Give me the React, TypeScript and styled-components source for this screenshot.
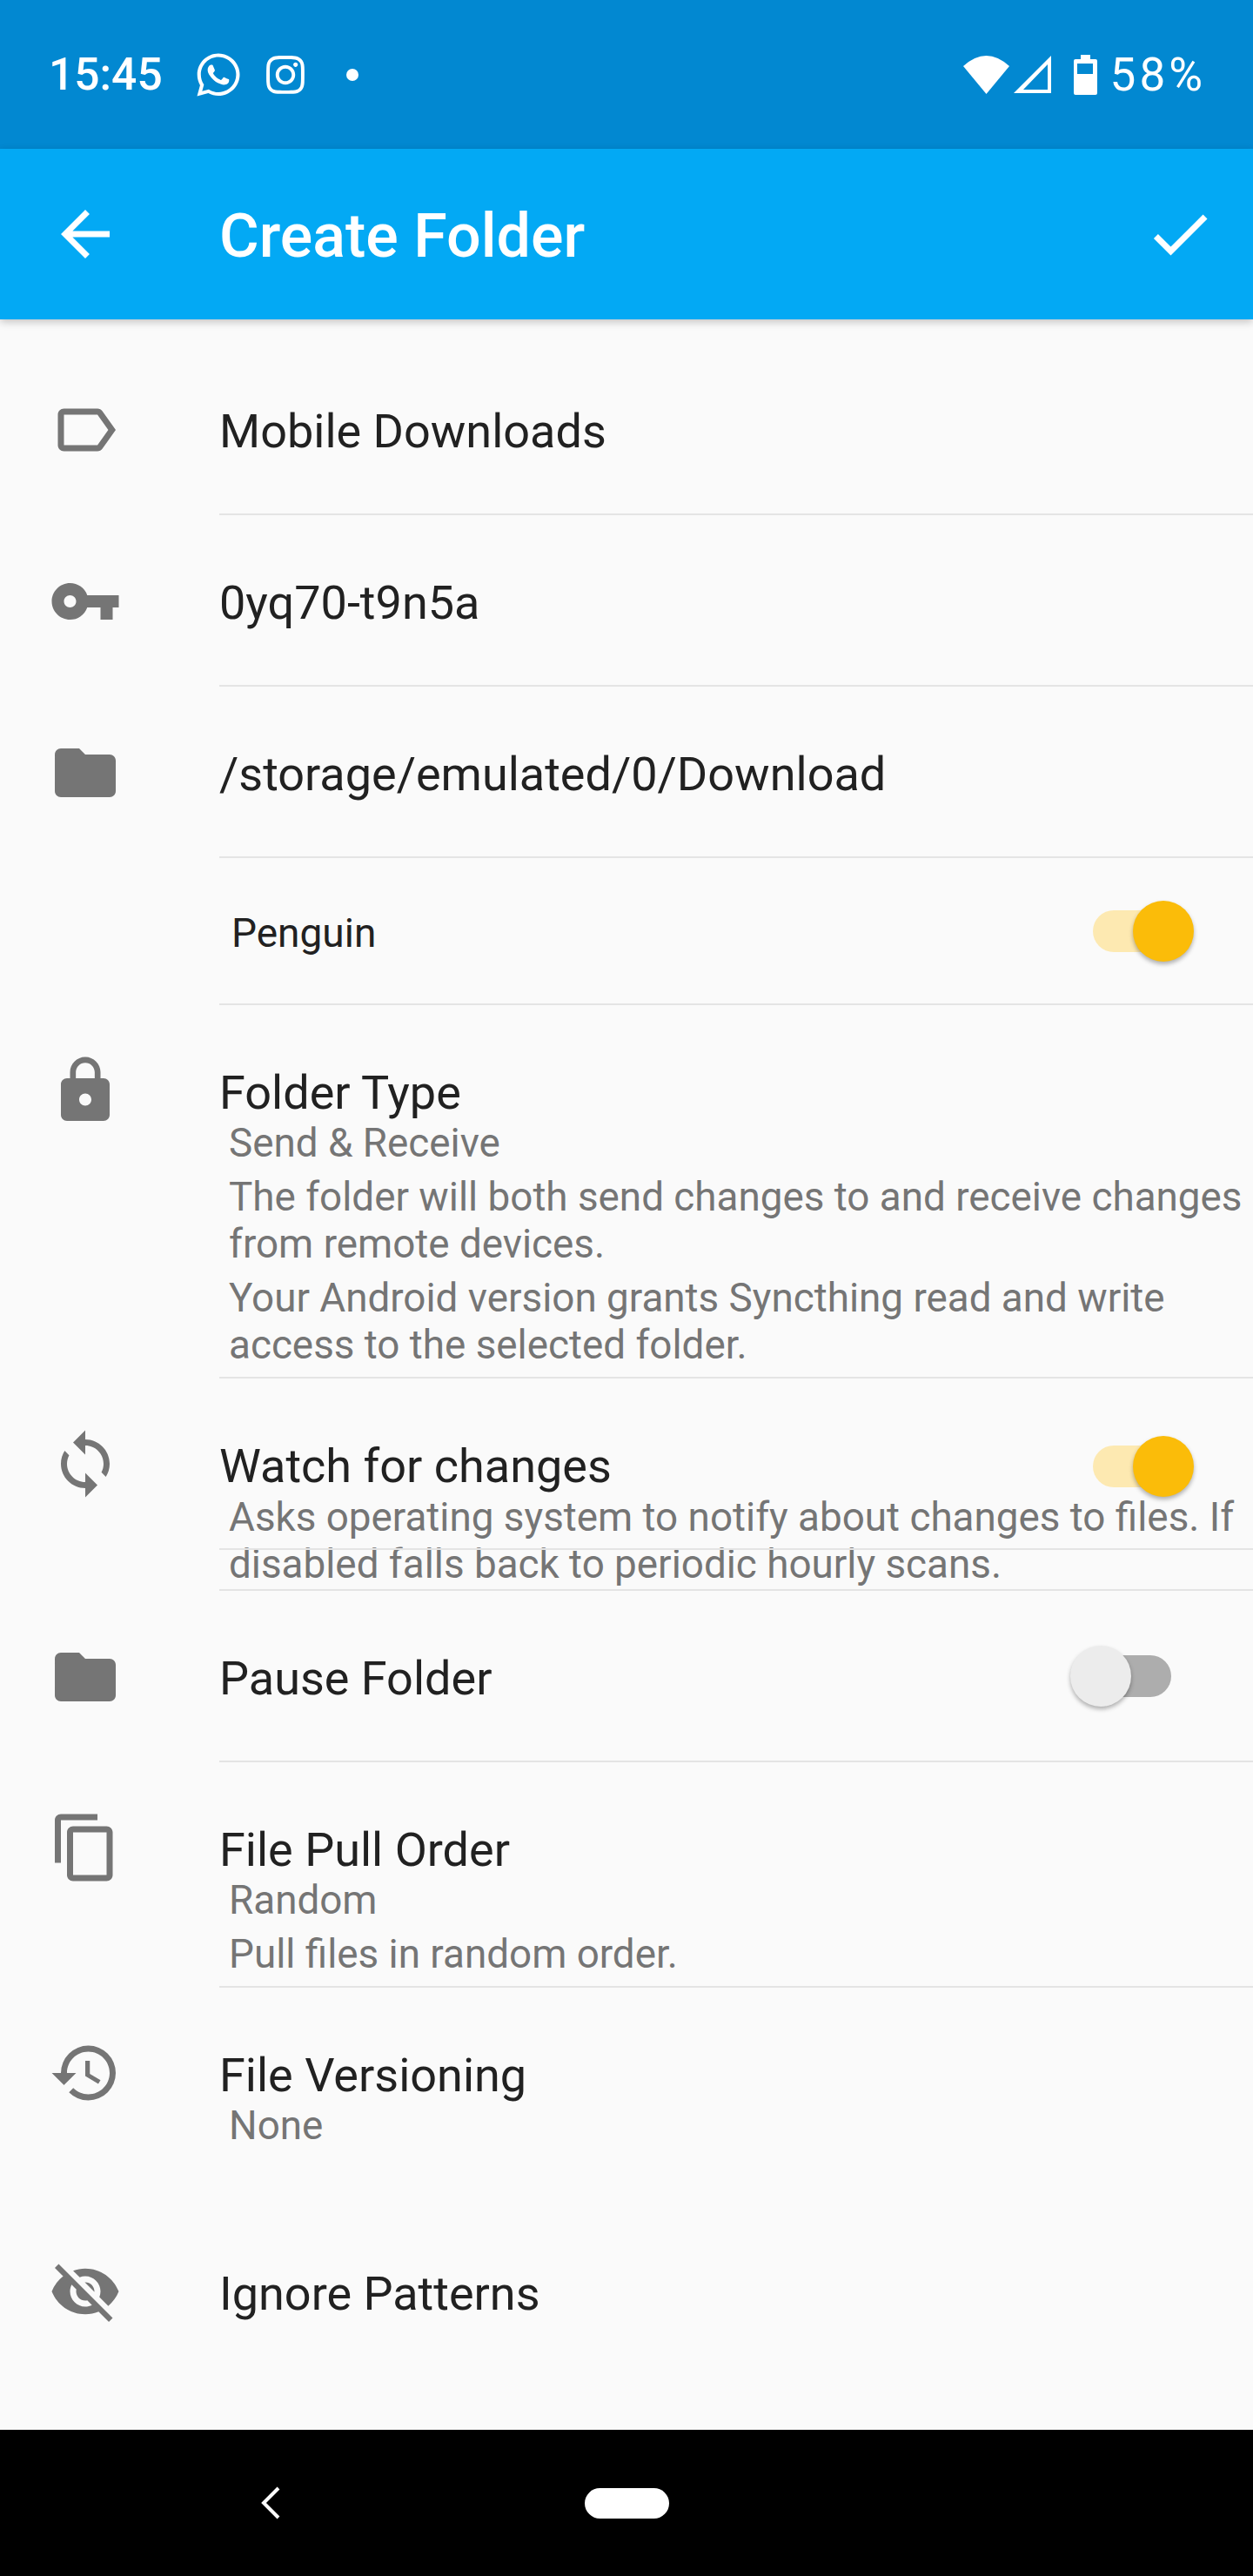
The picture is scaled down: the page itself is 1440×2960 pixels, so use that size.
import { ReactNode } from 'react';
import styled, { createGlobalStyle } from 'styled-components';
import { FaInstagram, FaWhatsapp } from 'react-icons/fa';
import {
  MdArrowBack,
  MdCheck,
  MdContentCopy,
  MdFolder,
  MdHistory,
  MdLabelOutline,
  MdLock,
  MdSync,
  MdVisibilityOff,
  MdVpnKey,
} from 'react-icons/md';

const GlobalStyle = createGlobalStyle`
  html, body {
    margin: 0;
    padding: 0;
    background: #fafafa;
  }
`;

const Screen = styled.div`
  display: flex;
  flex-direction: column;
  height: 100vh;
  overflow: hidden;
  background: #fafafa;
  font-family: Roboto, 'Liberation Sans', sans-serif;
`;

const StatusBar = styled.div`
  display: flex;
  flex: 0 0 171px;
  align-items: center;
  justify-content: space-between;
  padding: 0 54px 0 56px;
  background: #0288d1;
  color: #fff;
`;

const StatusGroup = styled.div`
  display: flex;
  align-items: center;
`;

const Clock = styled.span`
  margin-right: 36px;
  font-size: 51.5px;
  font-weight: 500;
  line-height: 60px;
`;

const AppIcons = styled.div`
  display: flex;
  align-items: center;
  gap: 24px;

  svg {
    display: block;
  }
`;

const NotificationDot = styled.span`
  width: 14px;
  height: 14px;
  margin-left: 45px;
  border-radius: 50%;
  background: #fff;
`;

const SystemGlyph = styled.svg<{ $gap: number }>`
  display: block;
  margin-left: ${({ $gap }) => $gap}px;
  fill: #fff;
`;

const BatteryText = styled.span`
  margin-left: 15px;
  font-size: 53px;
  line-height: 60px;
  letter-spacing: 4px;
`;

const Toolbar = styled.header`
  position: relative;
  z-index: 1;
  display: flex;
  flex: 0 0 196px;
  align-items: center;
  padding: 0 42px 0 56px;
  background: #03a9f4;
  color: #fff;
  box-shadow: 0 3px 9px rgba(0, 0, 0, 0.22);
  font-size: 84px;

  svg {
    display: block;
  }
`;

const ToolbarTitle = styled.h1`
  flex: 1;
  margin: 4px 0 0 112px;
  font-size: 70px;
  font-weight: 500;
  line-height: 84px;
`;

const List = styled.main`
  flex: 1;
  padding-top: 28px;
  overflow: hidden;
`;

const Row = styled.section<{ $height?: number }>`
  display: flex;
  box-sizing: border-box;
  align-items: stretch;
  min-height: ${({ $height }) => ($height ? `${$height}px` : 'auto')};
`;

const IconCell = styled.div<{ $center?: boolean; $top?: number }>`
  display: flex;
  flex: 0 0 196px;
  align-items: ${({ $center }) => ($center ? 'center' : 'flex-start')};
  padding: ${({ $top }) => $top ?? 0}px 0 0 56px;
  color: #757575;
  font-size: 84px;

  svg {
    display: block;
  }
`;

const Body = styled.div<{ $divided?: boolean }>`
  position: relative;
  display: flex;
  flex: 1;
  box-sizing: border-box;
  min-width: 0;
  border-bottom: 2px solid ${({ $divided }) => ($divided ? '#e4e4e4' : 'transparent')};
`;

const SingleLine = styled(Body)`
  align-items: center;
  justify-content: space-between;
`;

const Detail = styled(Body)<{ $bottom?: number }>`
  flex-direction: column;
  padding: 71px 0 ${({ $bottom }) => $bottom ?? 0}px;
`;

const TitleLine = styled.div`
  display: flex;
  align-items: center;
  justify-content: space-between;
  height: 60px;
  margin-bottom: 1px;
`;

const Title = styled.div`
  color: #212121;
  font-size: 54px;
  line-height: 60px;
`;

// single-line rows sit a little under the row's centre
const RowLabel = styled(Title)`
  margin-top: 7px;
`;

const SmallTitle = styled.div`
  margin-top: 4px;
  padding-left: 14px;
  color: #212121;
  font-size: 46px;
  line-height: 60px;
`;

const Notes = styled.div`
  display: flex;
  flex-direction: column;
  gap: 8px;
  margin-top: 1px;
  padding-left: 11px;
`;

const Note = styled.div`
  color: #757575;
  font-size: 45.8px;
  line-height: 54px;
`;

const OverlayRule = styled.div`
  position: absolute;
  top: 195px;
  left: 0;
  right: 0;
  height: 2px;
  background: #e4e4e4;
`;

const SwitchRoot = styled.div<{ $inset: number }>`
  position: relative;
  flex: 0 0 130px;
  height: 70px;
  margin-right: ${({ $inset }) => $inset}px;
`;

const SwitchTrack = styled.div<{ $on?: boolean }>`
  position: absolute;
  top: 11px;
  left: 14px;
  width: 102px;
  height: 48px;
  border-radius: 24px;
  background: ${({ $on }) => ($on ? '#fde9b1' : '#adadad')};
`;

const SwitchKnob = styled.div<{ $on?: boolean }>`
  position: absolute;
  top: 0;
  left: ${({ $on }) => ($on ? 60 : 0)}px;
  width: 70px;
  height: 70px;
  border-radius: 50%;
  background: ${({ $on }) => ($on ? '#fbbc09' : '#ececec')};
  box-shadow: 0 3px 5px rgba(0, 0, 0, 0.3);
`;

const NavBar = styled.nav`
  display: flex;
  flex: 0 0 168px;
  align-items: center;
  padding-left: 299px;
  background: #000;
`;

const NavBack = styled.svg`
  display: block;
  fill: none;
  stroke: #fff;
  stroke-width: 4;
`;

const HomePill = styled.div`
  width: 97px;
  height: 35px;
  margin-left: 349px;
  border-radius: 18px;
  background: #fff;
`;

function Switch({ on, inset }: { on?: boolean; inset: number }) {
  return (
    <SwitchRoot $inset={inset}>
      <SwitchTrack $on={on} />
      <SwitchKnob $on={on} />
    </SwitchRoot>
  );
}

function SimpleRow({ icon, children }: { icon: ReactNode; children: ReactNode }) {
  return (
    <Row $height={197}>
      <IconCell $center>{icon}</IconCell>
      <SingleLine $divided>{children}</SingleLine>
    </Row>
  );
}

export default function App() {
  return (
    <Screen>
      <GlobalStyle />
      <StatusBar>
        <StatusGroup>
          <Clock>15:45</Clock>
          <AppIcons>
            <FaWhatsapp size={56} />
            <FaInstagram size={50} />
          </AppIcons>
          <NotificationDot />
        </StatusGroup>
        <StatusGroup>
          <SystemGlyph $gap={0} width="53" height="44" viewBox="0 0 53 44">
            <path d="M26.5 44L0 12Q26.5-12 53 12Z" />
          </SystemGlyph>
          <SystemGlyph $gap={5} width="43" height="43" viewBox="0 0 43 43">
            <path fillRule="evenodd" d="M43 0V43H0ZM39 10L11 39H39Z" />
          </SystemGlyph>
          <SystemGlyph $gap={26} width="27" height="46" viewBox="0 0 27 46">
            <path
              fillRule="evenodd"
              d="M8 0H19V5H25Q27 5 27 7V44Q27 46 25 46H2Q0 46 0 44V7Q0 5 2 5H8ZM4 10V22H22V10Z"
            />
          </SystemGlyph>
          <BatteryText>58%</BatteryText>
        </StatusGroup>
      </StatusBar>

      <Toolbar>
        <MdArrowBack />
        <ToolbarTitle>Create Folder</ToolbarTitle>
        <MdCheck />
      </Toolbar>

      <List>
        <SimpleRow icon={<MdLabelOutline />}>
          <RowLabel>Mobile Downloads</RowLabel>
        </SimpleRow>
        <SimpleRow icon={<MdVpnKey />}>
          <RowLabel>0yq70-t9n5a</RowLabel>
        </SimpleRow>
        <SimpleRow icon={<MdFolder />}>
          <RowLabel>/storage/emulated/0/Download</RowLabel>
        </SimpleRow>

        <Row $height={169}>
          <IconCell />
          <SingleLine $divided>
            <SmallTitle>Penguin</SmallTitle>
            <Switch on inset={68} />
          </SingleLine>
        </Row>

        <Row>
          <IconCell $top={56}>
            <MdLock />
          </IconCell>
          <Detail $divided $bottom={9}>
            <Title>Folder Type</Title>
            <Notes>
              <Note>Send &amp; Receive</Note>
              <Note>The folder will both send changes to and receive changes from remote devices.</Note>
              <Note>Your Android version grants Syncthing read and write access to the selected folder.</Note>
            </Notes>
          </Detail>
        </Row>

        <Row>
          <IconCell $top={56}>
            <MdSync />
          </IconCell>
          <Detail $divided $bottom={1}>
            <TitleLine>
              <Title>Watch for changes</Title>
              <Switch on inset={68} />
            </TitleLine>
            <Notes>
              <Note>Asks operating system to notify about changes to files. If disabled falls back to periodic hourly scans.</Note>
            </Notes>
            <OverlayRule />
          </Detail>
        </Row>

        <Row $height={197}>
          <IconCell $center>
            <MdFolder />
          </IconCell>
          <SingleLine $divided>
            <RowLabel>Pause Folder</RowLabel>
            <Switch inset={80} />
          </SingleLine>
        </Row>

        <Row>
          <IconCell $top={56}>
            <MdContentCopy />
          </IconCell>
          <Detail $divided $bottom={9}>
            <Title>File Pull Order</Title>
            <Notes>
              <Note>Random</Note>
              <Note>Pull files in random order.</Note>
            </Notes>
          </Detail>
        </Row>

        <Row $height={251}>
          <IconCell $top={56}>
            <MdHistory />
          </IconCell>
          <Detail>
            <Title>File Versioning</Title>
            <Notes>
              <Note>None</Note>
            </Notes>
          </Detail>
        </Row>

        <Row $height={196}>
          <IconCell $center>
            <MdVisibilityOff />
          </IconCell>
          <SingleLine>
            <RowLabel>Ignore Patterns</RowLabel>
          </SingleLine>
        </Row>
      </List>

      <NavBar>
        <NavBack width="24" height="40" viewBox="0 0 24 40">
          <path d="M21 3L4 20L21 37" />
        </NavBack>
        <HomePill />
      </NavBar>
    </Screen>
  );
}
